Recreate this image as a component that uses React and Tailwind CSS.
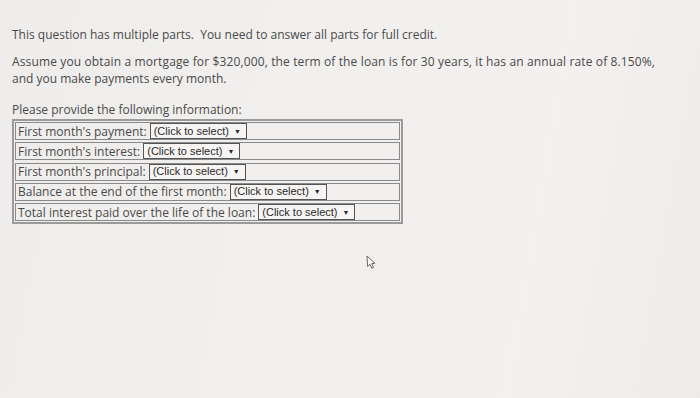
import React from "react";

const rows = [
  "First month's payment:",
  "First month's interest:",
  "First month's principal:",
  "Balance at the end of the first month:",
  "Total interest paid over the life of the loan:",
];

function Sel() {
  return (
    <span className="inline-flex items-center h-[16px] border border-[#555] bg-[#f6f5f3] pl-[3px] pr-[5px] text-[11px] leading-none text-[#2a2a2a] [font-family:'Liberation_Sans',Arial,sans-serif]">
      <span>(Click to select)</span>
      <span className="ml-[5px] text-[7px]">▼</span>
    </span>
  );
}

export default function App() {
  return (
    <div className="w-[700px] h-[398px] overflow-hidden relative bg-[linear-gradient(100deg,#eeedeb_0%,#f1f0ee_45%,#f3f0ef_75%,#efebea_100%)] text-[#4a4a4a] [font-family:'Open_Sans',sans-serif]">
      <div className="pl-[12px] pt-[26px] text-[12px] leading-[17px]">
        <p>This question has multiple parts.&nbsp; You need to answer all parts for full credit.</p>
        <p className="mt-[10px]">
          <span className="tracking-[0.13px]">
            Assume you obtain a mortgage for $320,000, the term of the loan is for 30 years, it has an annual rate of 8.150%,
          </span>
          <br />
          and you make payments every month.
        </p>
        <p className="mt-[14px]">Please provide the following information:</p>
        <div className="mt-[1px] w-[391px] border-2 border-[#9a9a9a] p-[1px] flex flex-col gap-[2.25px]">
          {rows.map((r) => (
            <div key={r} className="h-[18px] border border-[#8a8a8a] flex items-center pl-[2px] gap-[3px] text-[12px]">
              <span>{r}</span>
              <Sel />
            </div>
          ))}
        </div>
      </div>
      <svg className="absolute left-[366px] top-[255px]" width="13" height="15" viewBox="0 0 13 15">
        <path d="M1 1 L1.6 11.5 L3.9 9.3 L5.8 13.3 L7.6 12.5 L5.7 8.6 L9 8.4 Z" fill="#f7f6f4" stroke="#6a6a6a" strokeWidth="1" strokeLinejoin="round" />
      </svg>
    </div>
  );
}
